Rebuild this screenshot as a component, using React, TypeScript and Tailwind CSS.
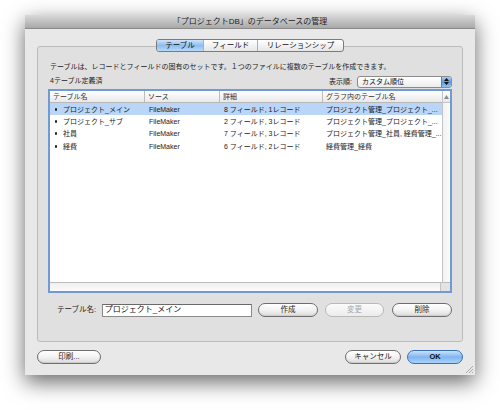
import React from "react";

const FONT = { fontFamily: '"Liberation Sans", "Noto Sans CJK JP", sans-serif' };

function Pill({ children, w, kind = "normal" }: { children: React.ReactNode; w: string; kind?: "normal" | "disabled" | "default" }) {
  const base = "h-[14px] rounded-full flex items-center justify-center text-[7.5px] leading-none";
  if (kind === "default")
    return (
      <div className={`${base} ${w} border border-[#3a6fb5] bg-gradient-to-b from-[#c9e2fb] via-[#7fb6ef] to-[#a9d2fa] text-[#111] font-bold`}>
        {children}
      </div>
    );
  if (kind === "disabled")
    return (
      <div className={`${base} ${w} border border-[#b9b9b9] bg-gradient-to-b from-[#fbfbfb] to-[#ececec] text-[#a8a8a8]`}>
        {children}
      </div>
    );
  return (
    <div className={`${base} ${w} border border-[#6e6e6e] bg-gradient-to-b from-white via-[#f3f3f3] to-[#dcdcdc] text-[#1a1a1a] shadow-[inset_0_-1px_1px_rgba(0,0,0,0.08)]`}>
      {children}
    </div>
  );
}

const rows = [
  ["プロジェクト_メイン", "FileMaker", "8 フィールド, 1レコード", "プロジェクト管理_プロジェクト_..."],
  ["プロジェクト_サブ", "FileMaker", "2 フィールド, 3レコード", "プロジェクト管理_プロジェクト_..."],
  ["社員", "FileMaker", "7 フィールド, 3レコード", "プロジェクト管理_社員, 経費管理_..."],
  ["経費", "FileMaker", "6 フィールド, 2レコード", "経費管理_経費"],
];

export default function App() {
  return (
    <div className="w-[500px] h-[410px] bg-white overflow-hidden" style={FONT}>
      <div className="ml-[25px] mt-[15px] w-[450px] h-[360px] bg-[#e8e8e8] flex flex-col shadow-[0_7px_20px_rgba(0,0,0,0.6)] relative">
        {/* title bar */}
        <div className="h-[14px] bg-gradient-to-b from-[#d9d9d9] to-[#a9a9a9] border-b border-[#8a8a8a] flex items-center justify-center text-[8px] text-[#222] leading-none">
          「プロジェクトDB」のデータベースの管理
        </div>

        <div className="flex flex-col px-[12px] pt-[10px]">
          {/* tabs */}
          <div className="flex justify-center relative z-10 -mb-[6px]">
            <div className="flex h-[13px] rounded-[3px] border border-[#7b7b7b] overflow-hidden text-[7.5px] leading-none text-[#111] bg-gradient-to-b from-white to-[#e6e6e6]">
              <div className="w-[46px] flex items-center justify-center bg-gradient-to-b from-[#cfe4fb] via-[#8dbdf0] to-[#b8d9fa]">テーブル</div>
              <div className="w-[54px] flex items-center justify-center border-l border-[#b0b0b0]">フィールド</div>
              <div className="w-[86px] flex items-center justify-center border-l border-[#b0b0b0]">リレーションシップ</div>
            </div>
          </div>

          {/* group box */}
          <div className="h-[296px] bg-[#e0e0e0] border border-[#bcbcbc] rounded-[3px] flex flex-col px-[10px] pt-[16px]">
            <div className="text-[7px] leading-none text-[#222] pl-[2px]">
              テーブルは、レコードとフィールドの固有のセットです。１つのファイルに複数のテーブルを作成できます。
            </div>
            <div className="flex items-center justify-between mt-[5px] h-[13px]">
              <div className="text-[7px] leading-none text-[#222] pl-[2px] -mt-[3px]">4テーブル定義済</div>
              <div className="flex items-center gap-[5px]">
                <span className="text-[7px] leading-none text-[#222]">表示順:</span>
                <div className="w-[95px] h-[12px] rounded-[3px] border border-[#8c8c8c] bg-gradient-to-b from-white to-[#ececec] flex items-center overflow-hidden">
                  <span className="flex-1 pl-[4px] text-[7px] leading-none text-[#111]">カスタム順位</span>
                  <div className="w-[10px] h-full bg-gradient-to-b from-[#a9cff6] via-[#5a9ae4] to-[#8fc0f3] flex flex-col items-center justify-center gap-[1px] border-l border-[#5a7fb0]">
                    <svg width="5" height="3" viewBox="0 0 5 3"><path d="M0 3 L2.5 0 L5 3Z" fill="#111" /></svg>
                    <svg width="5" height="3" viewBox="0 0 5 3"><path d="M0 0 L2.5 3 L5 0Z" fill="#111" /></svg>
                  </div>
                </div>
              </div>
            </div>

            {/* list */}
            <div className="mt-[1px] w-[404px] h-[204px] border-2 border-[#6f9ad4] bg-white flex flex-col">
              <div className="flex-1 flex min-h-0">
                <div className="flex-1 flex flex-col">
                  <div className="flex h-[12px] bg-gradient-to-b from-white to-[#e9e9e9] border-b border-[#b8b8b8] text-[7px] leading-none text-[#333]">
                    <div className="w-[95px] flex items-center pl-[3px] border-r border-[#bcbcbc]">テーブル名</div>
                    <div className="w-[75px] flex items-center pl-[3px] border-r border-[#bcbcbc]">ソース</div>
                    <div className="w-[103px] flex items-center pl-[3px] border-r border-[#bcbcbc]">詳細</div>
                    <div className="flex-1 flex items-center pl-[3px]">グラフ内のテーブル名</div>
                  </div>
                  {rows.map((r, i) => (
                    <div key={i} className={`flex h-[12.3px] text-[7px] leading-none text-[#1a1a1a] ${i === 0 ? "bg-[#b9d5f7]" : ""}`}>
                      <div className="w-[95px] flex items-center pl-[5px] gap-[6px] whitespace-nowrap overflow-hidden">
                        <span className="w-[2px] h-[3px] rounded-full bg-[#222] shrink-0" />
                        <span>{r[0]}</span>
                      </div>
                      <div className="w-[75px] flex items-center pl-[4px] whitespace-nowrap">{r[1]}</div>
                      <div className="w-[103px] flex items-center pl-[4px] whitespace-nowrap">{r[2]}</div>
                      <div className="flex-1 flex items-center pl-[3px] whitespace-nowrap overflow-hidden">{r[3]}</div>
                    </div>
                  ))}
                </div>
                {/* vertical scrollbar */}
                <div className="w-[10px] flex flex-col border-l border-[#c4c4c4] bg-gradient-to-r from-[#f2f2f2] to-[#fbfbfb]">
                  <div className="h-[12px] flex items-center justify-center border-b border-[#c4c4c4] bg-gradient-to-b from-white to-[#e9e9e9]">
                    <svg width="5" height="4" viewBox="0 0 5 4"><path d="M0 4 L2.5 0 L5 4Z" fill="#8a8a8a" /></svg>
                  </div>
                  <div className="flex-1" />
                </div>
              </div>
              {/* horizontal scrollbar */}
              <div className="h-[9px] flex border-t border-[#bdbdbd]">
                <div className="flex-1 bg-gradient-to-b from-[#f0f0f0] to-[#fafafa]" />
                <div className="w-[10px] bg-[#e3e3e3] border-l border-[#c4c4c4]" />
              </div>
            </div>

            {/* name row */}
            <div className="flex items-center mt-[10px] h-[14px]">
              <span className="ml-[9px] w-[46px] text-[7.5px] leading-none text-[#222]">テーブル名:</span>
              <div className="w-[154px] h-[13px] bg-white border border-[#8a8a8a] border-t-[#6a6a6a] flex items-center pl-[2px] text-[8px] leading-none text-[#111]">
                プロジェクト_メイン
              </div>
              <div className="ml-[6px]"><Pill w="w-[60px]">作成</Pill></div>
              <div className="ml-[7px]"><Pill w="w-[59px]" kind="disabled">変更</Pill></div>
              <div className="ml-[8px]"><Pill w="w-[60px]">削除</Pill></div>
            </div>
          </div>

          {/* bottom buttons */}
          <div className="flex items-center mt-[8px]">
            <Pill w="w-[64px]">印刷...</Pill>
            <div className="flex-1" />
            <Pill w="w-[56px]">キャンセル</Pill>
            <div className="ml-[6px]"><Pill w="w-[56px]" kind="default">OK</Pill></div>
          </div>
        </div>

        {/* resize grip */}
        <svg className="absolute right-[2px] bottom-[2px]" width="8" height="8" viewBox="0 0 8 8">
          <path d="M8 1 L1 8 M8 4 L4 8 M8 7 L7 8" stroke="#9a9a9a" strokeWidth="0.8" />
        </svg>
      </div>
    </div>
  );
}
